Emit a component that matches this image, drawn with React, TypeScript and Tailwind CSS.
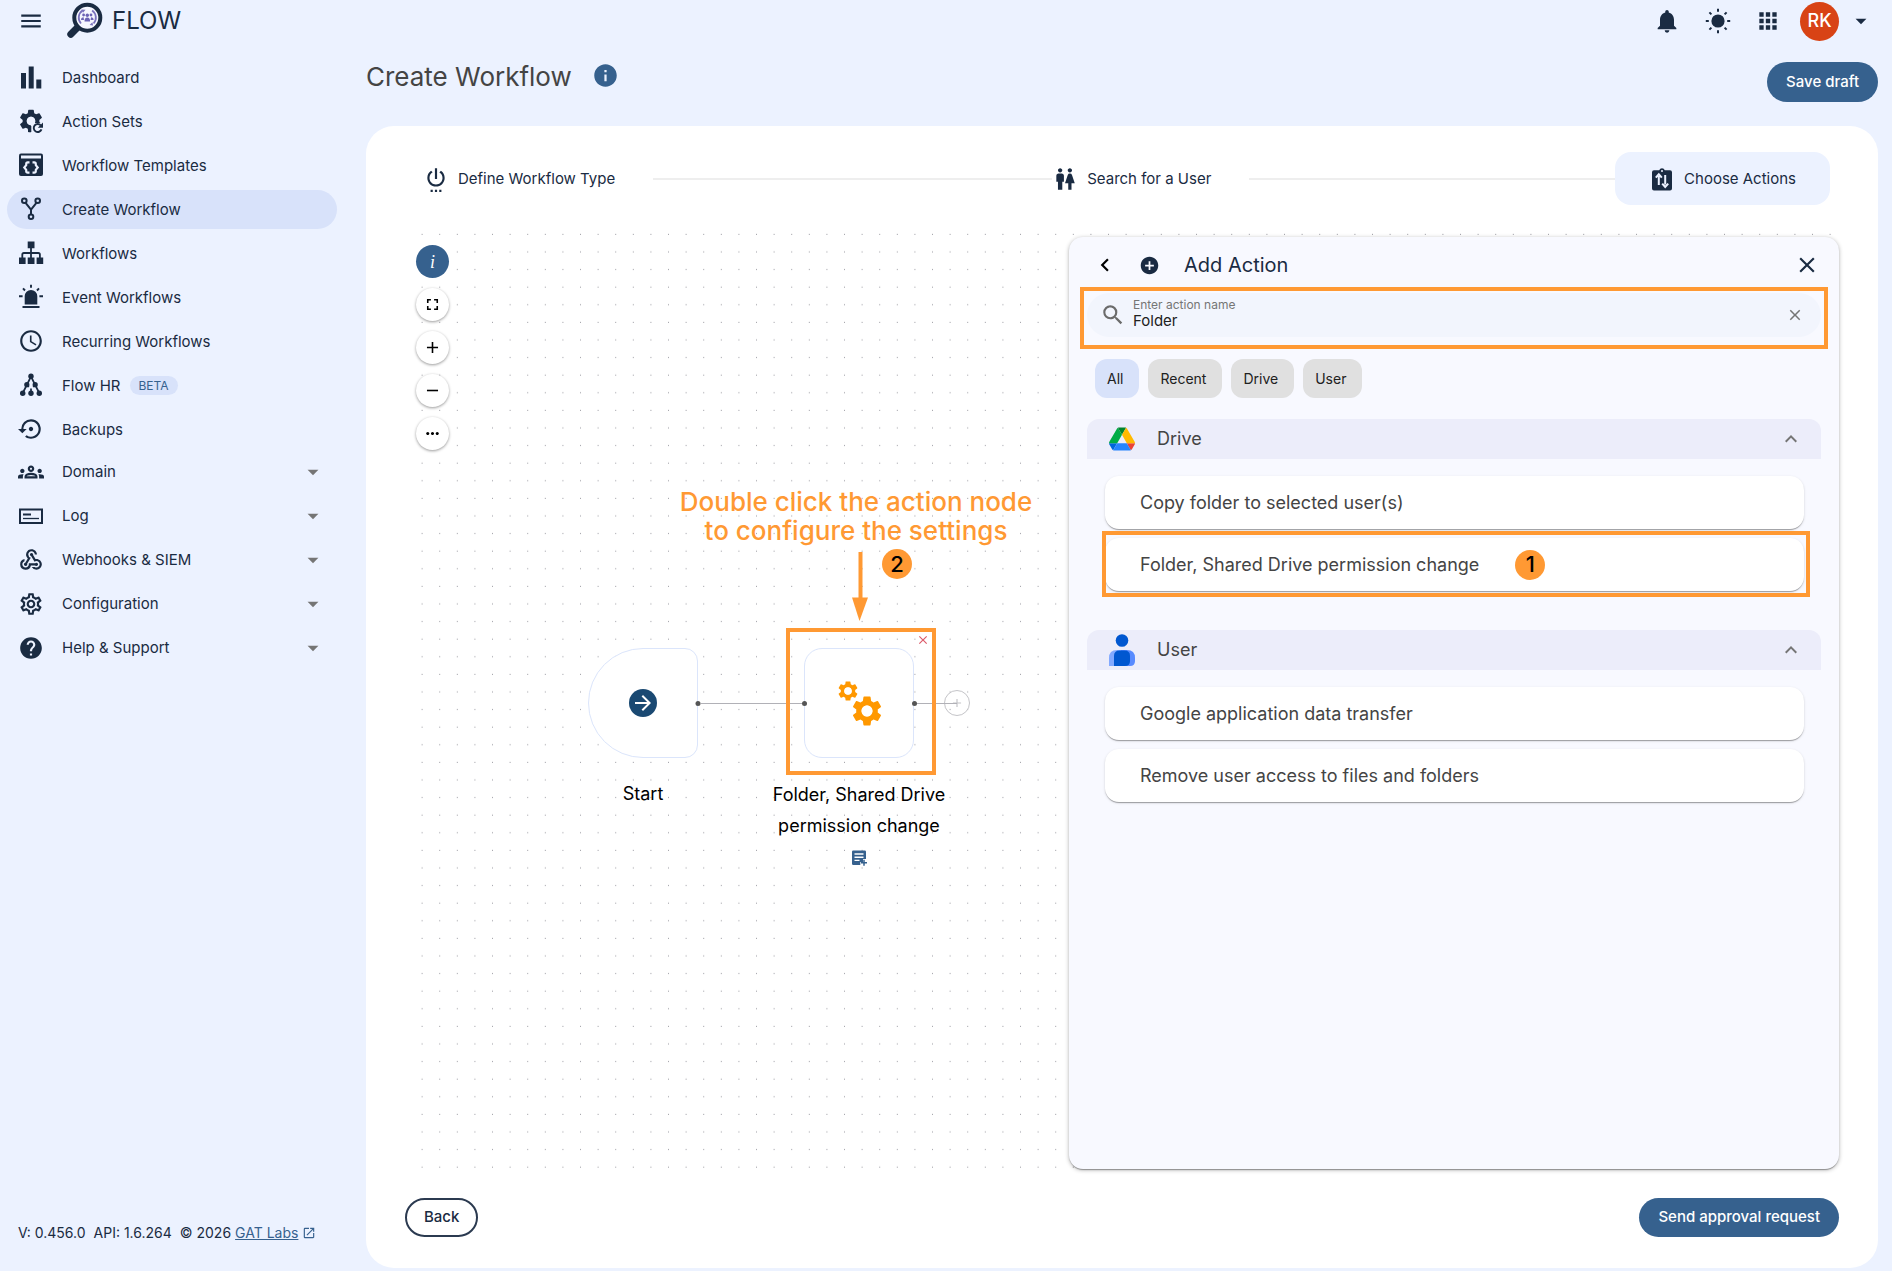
import { useState } from 'react'
import type { ComponentType, ReactNode } from 'react'
import clsx from 'clsx'
import {
  MdAccessTime,
  MdAdd,
  MdAddCircle,
  MdApps,
  MdArrowDropDown,
  MdArrowForward,
  MdChevronLeft,
  MdClose,
  MdExpandLess,
  MdExpandMore,
  MdFullscreen,
  MdHelp,
  MdInfo,
  MdMenu,
  MdMoreHoriz,
  MdNotifications,
  MdOpenInNew,
  MdOutlineGroups,
  MdOutlineSettings,
  MdRemove,
  MdSearch,
  MdSettings,
  MdSettingsBackupRestore,
  MdSettingsPower,
  MdWc,
  MdWebhook,
} from 'react-icons/md'

type IconProps = { className?: string }

function BarsIcon({ className }: IconProps) {
  return (
    <svg viewBox="0 0 26 26" className={className} fill="currentColor">
      <path d="M3 9h5v15.500H3zM10.700 2.500h5v22h-5zM18.300 15.500h5v9h-5z" />
    </svg>
  )
}

function GearRefreshIcon({ className }: IconProps) {
  return (
    <svg viewBox="0 0 26 26" className={className}>
      <MdSettings x={-1} y={-1} size={28} />
      <circle cx="13" cy="13" r="4.300" fill="#ecf2ff" />
      <path d="M13 15h13v11H13z" fill="#ecf2ff" />
      <path d="M10 18h3.300v6H10z" fill="currentColor" />
      <path d="M22.800 17.400a4 4 0 1 0 .7 4" fill="none" stroke="currentColor" strokeWidth="1.900" />
      <path d="M25 14.600v5.200h-5.200z" fill="currentColor" />
    </svg>
  )
}

function TemplateIcon({ className }: IconProps) {
  return (
    <svg viewBox="0 0 26 26" className={className}>
      <rect x="1" y="1.500" width="24" height="22.500" rx="2" fill="currentColor" />
      <path d="M3 3.500h20v3H3z" fill="#ecf2ff" />
      <path
        d="M11.500 10.300H9.800q-1.600 0-1.600 1.600v1.300L6.300 15.500l1.900 2.300v1.300q0 1.600 1.600 1.600h1.700M14.500 10.300h1.700q1.600 0 1.600 1.600v1.300l1.900 2.300-1.900 2.300v1.300q0 1.600-1.600 1.600h-1.700"
        fill="none"
        stroke="#ecf2ff"
        strokeWidth="2.200"
      />
    </svg>
  )
}

function ForkIcon({ className }: IconProps) {
  return (
    <svg viewBox="0 0 26 26" className={className} fill="none" stroke="currentColor" strokeWidth="2">
      <circle cx="6.300" cy="4.800" r="2.300" />
      <circle cx="19.700" cy="4.800" r="2.300" />
      <circle cx="13" cy="20.800" r="2.300" />
      <path d="M7.600 6.800 13 13.600l5.400-6.800M13 13.600v5" />
    </svg>
  )
}

function SitemapIcon({ className }: IconProps) {
  return (
    <svg viewBox="0 0 26 26" className={className} fill="currentColor">
      <path d="M9.700 1.500h6.800v6.800H9.700zM1 17.500h6.600V24H1zM9.700 17.500h6.800V24H9.700zM18.600 17.500h6.600V24h-6.600z" />
      <path d="M13 8v10M4.300 18v-3.400q0-1.600 1.600-1.600h14.400q1.600 0 1.600 1.600V18" fill="none" stroke="currentColor" strokeWidth="1.800" />
    </svg>
  )
}

function SirenIcon({ className }: IconProps) {
  return (
    <svg viewBox="0 0 26 26" className={className} fill="currentColor">
      <path d="M6.700 20.500V12.300a6.300 6.300 0 0 1 12.600 0v8.200zM4.500 22h17v2h-17z" />
      <path d="M13 .8v3M5 4.300l2 2.200M21 4.300l-2 2.200M1 12.300h3.600M21.400 12.300H25" stroke="currentColor" strokeWidth="1.900" />
    </svg>
  )
}

function TreeIcon({ className }: IconProps) {
  return (
    <svg viewBox="0 0 26 26" className={className} fill="currentColor">
      <path d="M13 4.500 8.800 13 4.500 21.500M13 4.500 17.200 13l4.300 8.500M13 21.500v-5M8.800 13l2 2M17.200 13l-2 2" fill="none" stroke="currentColor" strokeWidth="1.700" />
      <circle cx="13" cy="4.300" r="2.700" />
      <circle cx="8.800" cy="12.700" r="2.600" />
      <circle cx="17.200" cy="12.700" r="2.600" />
      <circle cx="4.700" cy="21.300" r="2.700" />
      <circle cx="13" cy="21.300" r="2.700" />
      <circle cx="21.300" cy="21.300" r="2.700" />
    </svg>
  )
}

function LogIcon({ className }: IconProps) {
  return (
    <svg viewBox="0 0 26 26" className={className} fill="none" stroke="currentColor">
      <rect x="2" y="6.500" width="22" height="13.500" strokeWidth="2" />
      <path d="M5 11.500h8" strokeWidth="2" />
      <path d="M5 15.500h16" strokeWidth="1.300" />
    </svg>
  )
}

function SunIcon({ className }: IconProps) {
  return (
    <svg viewBox="0 0 26 26" className={className}>
      <circle cx="13" cy="13" r="6.600" fill="currentColor" />
      <path
        d="M13 .8v3M13 22.200v3M.8 13h3M22.200 13h3M4.400 4.400l2 2M19.600 19.600l2 2M21.600 4.400l-2 2M6.400 19.600l-2 2"
        stroke="currentColor"
        strokeWidth="2"
      />
    </svg>
  )
}

function SwapClipboardIcon({ className }: IconProps) {
  return (
    <svg viewBox="0 0 26 26" className={className} fill="currentColor">
      <path d="M5 4.200h5.200a3 3 0 0 1 5.600 0H21a2 2 0 0 1 2 2V22.500a2 2 0 0 1-2 2H5a2 2 0 0 1-2-2V6.200a2 2 0 0 1 2-2z" />
      <circle cx="13" cy="5" r="1" fill="#ecf2ff" />
      <path d="M9.800 19v-9M6.800 11.600l3-3.400 3 3.400M16.200 9v9.500M13.200 17.600l3 3.400 3-3.400" fill="none" stroke="#ecf2ff" strokeWidth="2" />
    </svg>
  )
}

function NoteAddIcon({ className }: IconProps) {
  return (
    <svg viewBox="0 0 16 16" className={className}>
      <path d="M2.200.5h11.600q1.200 0 1.200 1.200V9h-3v3H9.300v3H2.200Q1 15 1 13.800V1.700Q1 .5 2.200.5z" fill="currentColor" />
      <path d="M3.500 4h9M3.500 7.200h9M3.500 10.400h5" stroke="#fff" strokeWidth="1.400" />
      <path d="M13 9.700v6M10 12.700h6" stroke="currentColor" strokeWidth="1.500" />
    </svg>
  )
}

function Logo({ className }: IconProps) {
  return (
    <svg viewBox="0 0 38 38" className={className}>
      <path d="M12.500 24.500 4.800 32.200" stroke="#1a2b42" strokeWidth="7" strokeLinecap="round" />
      <circle cx="21.300" cy="15.700" r="13" fill="#f6f7ff" stroke="#1a2b42" strokeWidth="4" />
      <path d="M16.500 8.500a8.700 8.700 0 0 0-1.500 13M26.100 8.500a8.700 8.700 0 0 1 1.500 13" fill="none" stroke="#7a72bd" strokeWidth="1.800" />
      <path d="m15.500 7.500 4 .2-2.500 3zM27.100 23.500l-3.500-.6 2.800-2.600z" fill="#7a72bd" />
      <g fill="#6c63b5">
        <circle cx="21.300" cy="13.200" r="1.700" />
        <circle cx="17.600" cy="13" r="1.400" />
        <circle cx="25" cy="13" r="1.400" />
        <path d="M18.500 19.500q0-4 2.800-4t2.800 4zM15 18q0-2.800 2.600-2.800l.4 2.800zM27.600 18q0-2.800-2.600-2.800l-.4 2.800z" />
      </g>
    </svg>
  )
}

function DriveLogo({ className }: IconProps) {
  return (
    <svg viewBox="0 0 87.300 78" className={className}>
      <path d="m6.600 66.850 3.850 6.650c.8 1.400 1.950 2.500 3.300 3.300l13.750-23.800h-27.500c0 1.550.4 3.100 1.200 4.500z" fill="#0066da" />
      <path d="m43.650 25-13.750-23.800c-1.350.8-2.500 1.900-3.300 3.300l-25.400 44a9.060 9.060 0 0 0 -1.200 4.500h27.500z" fill="#00ac47" />
      <path d="m73.550 76.800c1.350-.8 2.500-1.900 3.300-3.300l1.600-2.750 7.650-13.250c.8-1.400 1.200-2.950 1.200-4.500h-27.500l5.850 11.500z" fill="#ea4335" />
      <path d="m43.650 25 13.750-23.800c-1.350-.8-2.900-1.200-4.500-1.200h-18.500c-1.600 0-3.150.45-4.500 1.200z" fill="#00832d" />
      <path d="m59.800 53h-32.300l-13.750 23.800c1.350.8 2.900 1.200 4.500 1.200h50.800c1.600 0 3.150-.45 4.500-1.200z" fill="#2684fc" />
      <path d="m73.400 26.500-12.700-22c-.8-1.400-1.950-2.500-3.300-3.300l-13.750 23.800 16.150 28h27.450c0-1.550-.4-3.100-1.200-4.500z" fill="#ffba00" />
    </svg>
  )
}

function UserLogo({ className }: IconProps) {
  return (
    <svg viewBox="0 0 26 32" className={className}>
      <circle cx="13" cy="6.500" r="6.300" fill="#0057d0" />
      <path d="M0 32V24q0-8 8-8h4v16z" fill="#82a9ff" />
      <path d="M12 16h6q8 0 8 8v3q0 5-5 5h-9z" fill="#588bff" />
      <path d="M5 32V22q0-5.500 5.500-5.500h5Q21 16.500 21 22v5q0 5-5 5z" fill="#0057d0" />
    </svg>
  )
}

function GearsIcon({ className }: IconProps) {
  return (
    <svg viewBox="0 0 48 48" className={className}>
      <MdSettings x={1} y={0} size={24} />
      <MdSettings x={14} y={14} size={36} />
      <circle cx="13" cy="12" r="3.800" fill="#fff" />
      <circle cx="32" cy="32" r="5.500" fill="#fff" />
    </svg>
  )
}

type NavItem = { label: string; icon: ComponentType<IconProps>; badge?: string; active?: boolean }

const pages: NavItem[] = [
  { label: 'Dashboard', icon: BarsIcon },
  { label: 'Action Sets', icon: GearRefreshIcon },
  { label: 'Workflow Templates', icon: TemplateIcon },
  { label: 'Create Workflow', icon: ForkIcon, active: true },
  { label: 'Workflows', icon: SitemapIcon },
  { label: 'Event Workflows', icon: SirenIcon },
  { label: 'Recurring Workflows', icon: MdAccessTime },
  { label: 'Flow HR', icon: TreeIcon, badge: 'BETA' },
  { label: 'Backups', icon: MdSettingsBackupRestore },
]

const groups: NavItem[] = [
  { label: 'Domain', icon: MdOutlineGroups },
  { label: 'Log', icon: LogIcon },
  { label: 'Webhooks & SIEM', icon: MdWebhook },
  { label: 'Configuration', icon: MdOutlineSettings },
  { label: 'Help & Support', icon: MdHelp },
]

const chips = ['All', 'Recent', 'Drive', 'User']

function Header() {
  return (
    <header className="flex h-[42px] items-center pr-[18px] pl-[18px] text-[#1a2b42]">
      <button aria-label="Toggle menu">
        <MdMenu className="size-[26px]" />
      </button>
      <a href="#" className="ml-[22px] flex items-center gap-2 text-2xl">
        <Logo className="size-[38px]" />
        FLOW
      </a>
      <div className="ml-auto flex items-center gap-6">
        <button aria-label="Notifications">
          <MdNotifications className="size-7" />
        </button>
        <button aria-label="Theme">
          <SunIcon className="size-[26px]" />
        </button>
        <button aria-label="Apps">
          <MdApps className="size-[26px]" />
        </button>
        <button className="-ml-[5px] flex items-center gap-[9px]" aria-label="Account">
          <span className="flex size-[39px] items-center justify-center rounded-full bg-[#d84315] text-lg font-medium text-white">RK</span>
          <MdArrowDropDown className="size-[26px]" />
        </button>
      </div>
    </header>
  )
}

function Sidebar() {
  return (
    <aside className="flex w-[366px] shrink-0 flex-col pt-4 pl-[7px] text-[15px] leading-6 text-[#1a2b42]">
      <nav className="w-[330px]">
        <ul className="flex flex-col gap-[5px]">
          {pages.map(({ label, icon: Icon, badge, active }) => (
            <li key={label}>
              <a href="#" className={clsx('flex h-[39px] items-center gap-[18px] rounded-full pb-px pl-[11px]', active && 'bg-[#d8e2fa]')}>
                <Icon className="size-[26px]" />
                <span className="pt-0.5">{label}</span>
                {badge && <span className="-ml-[9px] rounded-full bg-[#d8e2fa] px-[9px] text-xs leading-[19px] text-[#36618e]">{badge}</span>}
              </a>
            </li>
          ))}
        </ul>
        <ul className="mt-[3px] flex flex-col gap-[5px]">
          {groups.map(({ label, icon: Icon }) => (
            <li key={label}>
              <button className="flex h-[39px] w-full items-center gap-[18px] rounded-full px-[11px]">
                <Icon className="size-[26px]" />
                <span>{label}</span>
                <MdArrowDropDown className="ml-auto size-[26px] text-[#757575]" />
              </button>
            </li>
          ))}
        </ul>
      </nav>
      <footer className="mt-auto mb-7 flex items-center gap-2 pl-[11px] text-sm">
        <span>V: 0.456.0</span>
        <span>API: 1.6.264</span>
        <span>© 2026</span>
        <a href="#" className="-ml-1 flex items-center gap-1 text-[#36618e]">
          <span className="underline">GAT Labs</span>
          <MdOpenInNew className="size-[14px]" />
        </a>
      </footer>
    </aside>
  )
}

function Stepper() {
  return (
    <ol className="mr-[9px] flex h-[53px] items-center text-[15px] leading-6 text-[#1a2b42]">
      <li className="flex items-center gap-[9px] pr-[38px] pl-[18px]">
        <MdSettingsPower className="size-[26px]" />
        Define Workflow Type
      </li>
      <li aria-hidden className="h-0.5 grow-12 bg-[#eeeeee]" />
      <li className="flex items-center gap-[9px] pr-[38px]">
        <MdWc className="size-[26px]" />
        Search for a User
      </li>
      <li aria-hidden className="h-0.5 grow-11 bg-[#eeeeee]" />
      <li className="flex h-full items-center gap-[9px] rounded-2xl bg-[#ecf2ff] px-[34px]" aria-current="step">
        <SwapClipboardIcon className="size-[26px]" />
        Choose Actions
      </li>
    </ol>
  )
}

function CanvasButton({ label, children, dark }: { label: string; children: ReactNode; dark?: boolean }) {
  return (
    <button
      aria-label={label}
      className={clsx('flex size-[33px] items-center justify-center rounded-full', dark ? 'bg-[#36618e] text-white' : 'bg-white text-black shadow-[0_1px_3px_rgba(0,0,0,0.4)]')}
    >
      {children}
    </button>
  )
}

function StepBadge({ children }: { children: ReactNode }) {
  return <span className="flex size-[30px] items-center justify-center rounded-full bg-[#ff9933] text-[22px] font-medium text-black">{children}</span>
}

function Flow() {
  return (
    <div className="absolute inset-0">
      <svg className="absolute inset-0 size-full">
        <pattern id="dots" width="17.600" height="17.600" patternUnits="userSpaceOnUse">
          <circle cx="17.100" cy="3.300" r="0.500" fill="#81818a" />
        </pattern>
        <rect width="100%" height="100%" fill="url(#dots)" />
      </svg>

      <div className="absolute top-[14px] left-[11px] flex flex-col gap-[10px]">
        <CanvasButton label="Info" dark>
          <span className="font-['Liberation_Serif'] text-lg leading-5 italic">i</span>
        </CanvasButton>
        <CanvasButton label="Fit view">
          <MdFullscreen className="size-[19px]" />
        </CanvasButton>
        <CanvasButton label="Zoom in">
          <MdAdd className="size-[19px]" />
        </CanvasButton>
        <CanvasButton label="Zoom out">
          <MdRemove className="size-[19px]" />
        </CanvasButton>
        <CanvasButton label="More">
          <MdMoreHoriz className="size-[19px]" />
        </CanvasButton>
      </div>

      <div className="absolute top-[417px] left-[183px] flex w-[110px] flex-col items-center">
        <div className="flex size-[110px] items-center justify-center rounded-l-[55px] rounded-r-[13px] border border-[#dbe5fb] bg-white">
          <span className="flex size-7 items-center justify-center rounded-full bg-[#1a4972] text-white">
            <MdArrowForward className="size-6" />
          </span>
        </div>
        <p className="mt-5 text-lg leading-[31px] text-black">Start</p>
      </div>

      <div className="absolute top-[417px] left-[354px] flex w-[200px] flex-col items-center">
        <div className="flex size-[110px] items-center justify-center rounded-[18px] border border-[#dbe5fb] bg-white text-[#ff9800]">
          <GearsIcon className="size-12" />
        </div>
        <p className="mt-[21px] text-center text-lg leading-[31px] text-black">
          Folder, Shared Drive
          <br />
          permission change
        </p>
        <button aria-label="Add note" className="mt-[9px] text-[#36618e]">
          <NoteAddIcon className="size-4" />
        </button>
      </div>

      <button aria-label="Remove node" className="absolute top-[402px] left-[511px] text-[#dc5a6a]">
        <MdClose className="size-[14px]" />
      </button>
      <button aria-label="Add node" className="absolute top-[459px] left-[539px] flex size-[26px] items-center justify-center rounded-full border border-[#c4c4c8] text-[#c4c4c8]">
        <MdAdd className="size-[14px]" />
      </button>

      {/* edges and their handles */}
      <svg className="pointer-events-none absolute inset-0 size-full">
        <path d="M296 472.500H397M512 472.500H552" stroke="#b1b1b7" />
        <circle cx="293" cy="472.500" r="2.500" fill="#555" />
        <circle cx="399.500" cy="472.500" r="2.500" fill="#555" />
        <circle cx="509.500" cy="472.500" r="2.500" fill="#555" />
        <path d="M455.500 321V368" stroke="#ff9933" strokeWidth="4" />
        <path d="M447 366.500h16L454.500 390z" fill="#ff9933" />
      </svg>

      <p className="absolute top-[256px] left-[251px] w-[400px] text-center text-[26px] leading-[29px] font-medium text-[#ff9933]">
        Double click the action node
        <br />
        to configure the settings
      </p>
      <div className="absolute top-[318px] left-[477px]">
        <StepBadge>2</StepBadge>
      </div>
      <div className="pointer-events-none absolute top-[397px] left-[381px] h-[147px] w-[150px] border-4 border-[#ff9933]" />
    </div>
  )
}

function ActionGroup({ title, logo, children }: { title: string; logo: ReactNode; children: ReactNode }) {
  const [open, setOpen] = useState(true)

  return (
    <section className="mb-[39px] text-lg text-[#444444]">
      <button onClick={() => setOpen(!open)} className="flex h-10 w-full items-center rounded-t-xl bg-[#ecedfa] pr-[18px] pl-[22px]">
        {logo}
        <span className="ml-[22px]">{title}</span>
        {open ? <MdExpandLess className="ml-auto size-6 text-[#757575]" /> : <MdExpandMore className="ml-auto size-6 text-[#757575]" />}
      </button>
      {open && <div className="mt-[17px] mr-[17px] ml-[18px] flex flex-col gap-[9px]">{children}</div>}
    </section>
  )
}

function ActionCard({ label, step }: { label: string; step?: string }) {
  return (
    <div className="relative">
      <button className="flex h-[53px] w-full items-center gap-9 rounded-[14px] bg-white pl-[35px] text-left shadow-[0_2px_1px_-1px_rgba(0,0,0,0.2),0_1px_1px_rgba(0,0,0,0.14),0_1px_3px_rgba(0,0,0,0.12)]">
        {label}
        {step && <StepBadge>{step}</StepBadge>}
      </button>
      {step && <div className="pointer-events-none absolute -top-[7px] -right-[6px] -bottom-[6px] -left-[3px] border-4 border-[#ff9933]" />}
    </div>
  )
}

function ActionPanel() {
  const [query, setQuery] = useState('Folder')
  const [chip, setChip] = useState('All')

  return (
    <div className="relative w-[770px] rounded-[14px] bg-[#f8f9ff] px-[18px] shadow-[0_2px_1px_-1px_rgba(0,0,0,0.2),0_1px_1px_rgba(0,0,0,0.14),0_1px_4px_rgba(0,0,0,0.3)]">
      <div className="flex h-14 items-center pr-px pl-[5px] text-[#1a2b42]">
        <button aria-label="Back to list" className="text-black">
          <MdChevronLeft className="size-[26px]" />
        </button>
        <MdAddCircle className="ml-[21px] size-[21px]" />
        <h2 className="ml-6 text-xl">Add Action</h2>
        <button aria-label="Close" className="ml-auto">
          <MdClose className="size-[26px]" />
        </button>
      </div>

      <div className="relative flex h-11 items-center rounded-full bg-[#f2f5fd] pr-[17px] pl-[13px]">
        <MdSearch className="size-[26px] text-[#6b6b6b]" />
        <div className="ml-[7px] flex grow flex-col pb-1">
          <label htmlFor="action-name" className="text-xs leading-4 text-[#757575]">
            Enter action name
          </label>
          <input id="action-name" value={query} onChange={(e) => setQuery(e.target.value)} className="h-4 w-full text-[15px] leading-4 text-[#212121] outline-none" />
        </div>
        <button aria-label="Clear" onClick={() => setQuery('')} className="text-[#757575]">
          <MdClose className="size-[18px]" />
        </button>
        <div className="pointer-events-none absolute -inset-x-[7px] -top-[6px] -bottom-3 border-4 border-[#ff9933]" />
      </div>

      <div className="mt-[22px] mb-[21px] flex gap-[9px] pl-2">
        {chips.map((c) => (
          <button
            key={c}
            onClick={() => setChip(c)}
            className={clsx('h-[39px] rounded-xl pr-4 pl-3 text-sm text-[#212121]', c === chip ? 'bg-[#d8e2fa]' : 'bg-[#e0e0e0]')}
          >
            {c}
          </button>
        ))}
      </div>

      <ActionGroup title="Drive" logo={<DriveLogo className="h-6 w-[26px]" />}>
        <ActionCard label="Copy folder to selected user(s)" />
        <ActionCard label="Folder, Shared Drive permission change" step="1" />
      </ActionGroup>
      <ActionGroup title="User" logo={<UserLogo className="h-8 w-[26px]" />}>
        <ActionCard label="Google application data transfer" />
        <ActionCard label="Remove user access to files and folders" />
      </ActionGroup>
    </div>
  )
}

export default function App() {
  return (
    <div className="flex min-h-screen flex-col bg-[#ecf2ff] font-['Inter',sans-serif]">
      <Header />
      <div className="flex grow">
        <Sidebar />
        <main className="flex min-w-0 grow flex-col pt-5 pr-[14px] pb-[3px]">
          <div className="flex items-start">
            <h1 className="text-[26px] leading-[30px] text-[#444444]">Create Workflow</h1>
            <button aria-label="About this page" className="ml-5 text-[#36618e]">
              <MdInfo className="size-[27px]" />
            </button>
            <button className="ml-auto h-10 rounded-full bg-[#36618e] px-[19px] text-[15px] font-medium text-white">Save draft</button>
          </div>

          <div className="mt-6 flex grow flex-col rounded-[28px] bg-white px-[39px] pt-[26px] pb-[31px]">
            <Stepper />
            <div className="relative mt-[26px] flex grow justify-end pt-1.5 pb-0.5">
              <Flow />
              <ActionPanel />
            </div>
            <div className="mt-[27px] flex justify-between text-[15px] font-medium">
              <button className="h-[39px] rounded-full border-2 border-[#2b3a50] px-[17px] text-[#1a2b42]">Back</button>
              <button className="h-[39px] rounded-full bg-[#36618e] px-[19px] text-white">Send approval request</button>
            </div>
          </div>
        </main>
      </div>
    </div>
  )
}
